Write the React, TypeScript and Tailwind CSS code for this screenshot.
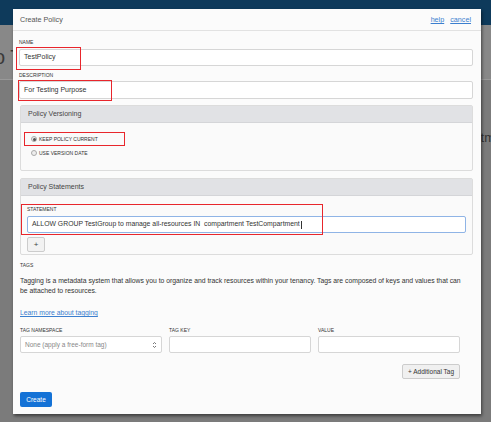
import React from "react";

const font = { fontFamily: '"Liberation Sans", Arial, sans-serif' };

type LabelProps = { children: React.ReactNode; className?: string };

const FieldLabel = ({ children, className = "" }: LabelProps) => (
  <div className={`text-[5px] leading-[6px] uppercase text-[#333] ${className}`}>{children}</div>
);

const Radio = ({ checked }: { checked?: boolean }) => (
  <span className="w-[6px] h-[6px] rounded-full border border-[#aaa] bg-[#eee] flex items-center justify-center">
    {checked && <span className="w-[3px] h-[3px] rounded-full bg-[#555]" />}
  </span>
);

// red annotation rectangles drawn over the form
const Mark = ({ className }: { className: string }) => (
  <div className={`absolute border-[1.5px] border-[#e8262c] pointer-events-none ${className}`} />
);

export default function App() {
  return (
    <div className="relative w-[491px] h-[422px] overflow-hidden bg-[#7b7b7b]" style={font}>
      {/* page behind the dialog */}
      <div className="h-[25px] bg-[#0e3a5b]" />
      <div className="h-[55px] bg-[#888] border-b border-[#999] flex items-center">
        <span className="text-[20px] text-[#3a3a3a] -ml-[6px] mt-[9px]">o T</span>
      </div>
      <div className="flex justify-end pt-[48px]">
        <span className="text-[13px] text-[#333] mr-[-4px]">tm</span>
      </div>

      {/* dialog */}
      <div className="absolute left-[13px] top-[9px] w-[468px] h-[405px] bg-[#fbfbfb] shadow-[1px_2px_3px_rgba(0,0,0,0.5)] flex flex-col">
        <div className="h-[22px] pt-[2px] flex items-center justify-between pl-[7px] pr-[10px] border-b border-[#e2e2e2] text-[7.2px] text-[#555]">
          <span>Create Policy</span>
          <span className="flex gap-[6px] text-[#3c7fcf] underline">
            <span>help</span>
            <span>cancel</span>
          </span>
        </div>

        <div className="pl-[6px] pr-[8px] pt-[8px] flex flex-col">
          <FieldLabel>Name</FieldLabel>
          <div className="mt-[4px] h-[17px] border border-[#d6d6d6] bg-white rounded-[2px] flex items-center px-[4px] text-[7px] text-[#333]">
            TestPolicy
          </div>
          <FieldLabel className="mt-[6px]">Description</FieldLabel>
          <div className="mt-[3px] h-[18px] border border-[#d6d6d6] bg-white rounded-[2px] flex items-center px-[4px] text-[7px] text-[#333]">
            For Testing Purpose
          </div>

          {/* Policy Versioning */}
          <div className="mt-[6px] ml-[1px] border border-[#dcdcdc] rounded-[2px] bg-[#fafafa]">
            <div className="h-[17px] bg-[#e1e2e5] border-b border-[#d4d5d8] flex items-center px-[7px] text-[7px] text-[#444]">
              Policy Versioning
            </div>
            <div className="pl-[10px] pt-[13px] pb-[14px] flex flex-col gap-[8px] text-[5px] text-[#333] uppercase">
              <div className="flex items-center gap-[2px] h-[6px]">
                <Radio checked />
                <span className="mt-[1px]">Keep Policy Current</span>
              </div>
              <div className="flex items-center gap-[2px] h-[6px]">
                <Radio />
                <span className="mt-[1px]">Use Version Date</span>
              </div>
            </div>
          </div>

          {/* Policy Statements */}
          <div className="mt-[7px] ml-[1px] border border-[#dcdcdc] rounded-[2px] bg-[#fafafa]">
            <div className="h-[17px] bg-[#e1e2e5] border-b border-[#d4d5d8] flex items-center px-[7px] text-[7px] text-[#444]">
              Policy Statements
            </div>
            <div className="pl-[6px] pr-[6px] pt-[10px] pb-[2px]">
              <FieldLabel>Statement</FieldLabel>
              <div className="mt-[4px] h-[17px] border border-[#8fb4e6] bg-white rounded-[2px] flex items-center px-[4px] text-[6.85px] text-[#333]">
                ALLOW GROUP TestGroup to manage all-resources IN&nbsp; compartment TestCompartment
                <span className="w-[1px] h-[8px] bg-[#333] ml-[1px]" />
              </div>
              <div className="mt-[4px] w-[18px] h-[15px] border border-[#ccc] bg-[#f2f2f2] rounded-[2px] flex items-center justify-center text-[8px] text-[#444]">
                +
              </div>
            </div>
          </div>

          {/* Tags */}
          <FieldLabel className="mt-[7px] ml-[1px]">Tags</FieldLabel>
          <p className="mt-[8px] ml-[1px] w-[444px] text-[6.8px] leading-[10px] text-[#333]">
            Tagging is a metadata system that allows you to organize and track resources within your tenancy. Tags are composed of keys and values that can be attached to resources.
          </p>
          <div className="mt-[12px] ml-[1px] text-[6.8px] leading-[9px] text-[#3c7fcf] underline">Learn more about tagging</div>

          <div className="mt-[10px] ml-[1px] grid grid-cols-3 gap-[7px] w-[440px]">
            <div>
              <FieldLabel>Tag Namespace</FieldLabel>
              <div className="mt-[3px] h-[17px] border border-[#d6d6d6] bg-white rounded-[2px] flex items-center justify-between px-[4px] text-[6.5px] text-[#888]">
                <span>None (apply a free-form tag)</span>
                <svg width="5" height="8" viewBox="0 0 5 8" fill="none" stroke="#555" strokeWidth="0.8">
                  <path d="M1 3 L2.5 1.5 L4 3" />
                  <path d="M1 5 L2.5 6.5 L4 5" />
                </svg>
              </div>
            </div>
            <div>
              <FieldLabel>Tag Key</FieldLabel>
              <div className="mt-[3px] h-[17px] border border-[#d6d6d6] bg-white rounded-[2px]" />
            </div>
            <div>
              <FieldLabel>Value</FieldLabel>
              <div className="mt-[3px] h-[17px] border border-[#d6d6d6] bg-white rounded-[2px]" />
            </div>
          </div>

          <div className="mt-[11px] w-[441px] flex justify-end">
            <div className="h-[15px] px-[5px] border border-[#ccc] bg-[#f0f0f0] rounded-[2px] flex items-center text-[6.5px] text-[#333]">
              + Additional Tag
            </div>
          </div>

          <div className="mt-[13px] ml-[1px] w-[32px] h-[15px] bg-[#1472d6] rounded-[2px] flex items-center justify-center text-[6.5px] text-white">
            Create
          </div>
        </div>

        <Mark className="left-[3px] top-[38px] w-[65px] h-[23px]" />
        <Mark className="left-[5px] top-[71px] w-[94px] h-[21px]" />
        <Mark className="left-[11px] top-[123px] w-[101px] h-[14px]" />
        <Mark className="left-[8px] top-[195px] w-[302px] h-[31px]" />
      </div>
    </div>
  );
}
